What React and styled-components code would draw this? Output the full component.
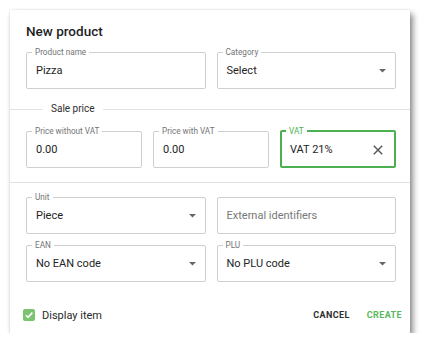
import React from 'react';
import styled, { createGlobalStyle } from 'styled-components';

const GlobalStyle = createGlobalStyle`
  body {
    margin: 0;
    background: #ffffff;
    font-family: Roboto, 'Liberation Sans', Arial, sans-serif;
  }
`;

const CaretIcon = () => (
  <svg width="7" height="4" viewBox="0 0 7 4">
    <path d="M0 0 L7 0 L3.5 3.5 Z" fill="#666666" />
  </svg>
);

const CloseIcon = () => (
  <svg width="10" height="10" viewBox="0 0 10 10">
    <path d="M0.8 0.8 L9.2 9.2 M9.2 0.8 L0.8 9.2" stroke="#555555" strokeWidth="1.4" />
  </svg>
);

const CheckIcon = () => (
  <svg width="10" height="10" viewBox="0 0 10 10">
    <path d="M1.8 5.2 L4 7.4 L8.4 2.6" stroke="#ffffff" strokeWidth="1.6" fill="none" />
  </svg>
);

const Field = ({ label, value, placeholder, select, clearable, focused }) => (
  <FieldBox focused={focused} $select={select} $noLabel={!label}>
    {label && <Label focused={focused}>{label}</Label>}
    <FieldContent $noLabel={!label}>
      <Value $placeholder={!value}>{value || placeholder}</Value>
      {select && <CaretIcon />}
      {clearable && <CloseIcon />}
    </FieldContent>
  </FieldBox>
);

const App = () => {
  return (
    <>
      <GlobalStyle />
      <Dialog>
        <Title>New product</Title>
        <Row columns={2} $top={7}>
          <Field label="Product name" value="Pizza" />
          <Field label="Category" value="Select" select />
        </Row>

        <Section>
          <SectionLegend>Sale price</SectionLegend>
          <Row columns={3} $flush $top={11}>
            <Field label="Price without VAT" value="0.00" />
            <Field label="Price with VAT" value="0.00" />
            <Field label="VAT" value="VAT 21%" clearable focused />
          </Row>
        </Section>

        <Row columns={2} $top={9}>
          <Field label="Unit" value="Piece" select />
          <Field placeholder="External identifiers" />
        </Row>
        <Row columns={2} $top={6}>
          <Field label="EAN" value="No EAN code" select />
          <Field label="PLU" value="No PLU code" select />
        </Row>

        <Footer>
          <CheckLabel>
            <CheckBox>
              <CheckIcon />
            </CheckBox>
            Display item
          </CheckLabel>
          <Actions>
            <TextButton>Cancel</TextButton>
            <TextButton primary>Create</TextButton>
          </Actions>
        </Footer>
      </Dialog>
    </>
  );
};

const Dialog = styled.div`
  box-sizing: border-box;
  margin: 10px 0 0 10px;
  width: 400px;
  height: 323px;
  padding-top: 12px;
  background: #ffffff;
  box-shadow: 3px 4px 6px rgba(0, 0, 0, 0.45), 0 0 2px rgba(0, 0, 0, 0.12);
  display: flex;
  flex-direction: column;
`;

const Title = styled.div`
  padding: 0 14px 0 16px;
  font-size: 13.5px;
  font-weight: 500;
  line-height: 18px;
  color: #1f1f1f;
`;

const Row = styled.div`
  display: grid;
  grid-template-columns: repeat(${(p) => p.columns}, 1fr);
  column-gap: 11px;
  padding: ${(p) => (p.$flush ? '0' : '0 14px 0 16px')};
  margin-top: ${(p) => p.$top}px;
`;

const Section = styled.fieldset`
  margin: 14px 0 0;
  padding: 0 14px 14px 16px;
  border: none;
  border-top: 1px solid #e3e3e3;
  border-bottom: 1px solid #e3e3e3;
  min-width: 0;
`;

const SectionLegend = styled.legend`
  margin-left: 17px;
  padding: 0 8px;
  font-size: 10px;
  line-height: 12px;
  color: #2e2e2e;
`;

const FieldBox = styled.fieldset`
  box-sizing: border-box;
  margin: ${(p) => (p.$noLabel ? '5px 0 0' : '0')};
  padding: 0 ${(p) => (p.focused ? '11px' : p.$select ? '9px' : '12px')} 0
    ${(p) => (p.focused ? '8px' : '9px')};
  min-width: 0;
  border: ${(p) => (p.focused ? '2px solid #4caf50' : '1px solid #cfcfcf')};
  border-radius: 2px;
  height: ${(p) => (p.$noLabel ? '37px' : '42px')};
`;

const Label = styled.legend`
  margin-left: -4px;
  padding: 0 3px;
  font-size: 8.2px;
  line-height: 10px;
  color: ${(p) => (p.focused ? '#4caf50' : '#747474')};
`;

const FieldContent = styled.div`
  display: flex;
  align-items: center;
  justify-content: space-between;
  box-sizing: border-box;
  height: ${(p) => (p.$noLabel ? '35px' : '30px')};
  padding-bottom: ${(p) => (p.$noLabel ? '0' : '3px')};
`;

const Value = styled.span`
  font-size: 11px;
  color: ${(p) => (p.$placeholder ? '#777777' : '#242424')};
  white-space: nowrap;
`;

const Footer = styled.div`
  display: flex;
  align-items: center;
  justify-content: space-between;
  height: 30px;
  margin-top: 18px;
  padding: 0 8px 0 13px;
`;

const CheckLabel = styled.label`
  display: flex;
  align-items: center;
  gap: 7px;
  font-size: 11px;
  color: #2a2a2a;
`;

const CheckBox = styled.span`
  display: flex;
  align-items: center;
  justify-content: center;
  width: 12px;
  height: 12px;
  border-radius: 2px;
  background: #7cc36f;
`;

const Actions = styled.div`
  display: flex;
  align-items: center;
  gap: 17px;
`;

const TextButton = styled.button`
  border: none;
  background: none;
  padding: 0;
  font-family: inherit;
  font-size: 9px;
  font-weight: 700;
  letter-spacing: 0.4px;
  text-transform: uppercase;
  color: ${(p) => (p.primary ? '#5cb85c' : '#2e2e2e')};
  cursor: pointer;
`;

export default App;
